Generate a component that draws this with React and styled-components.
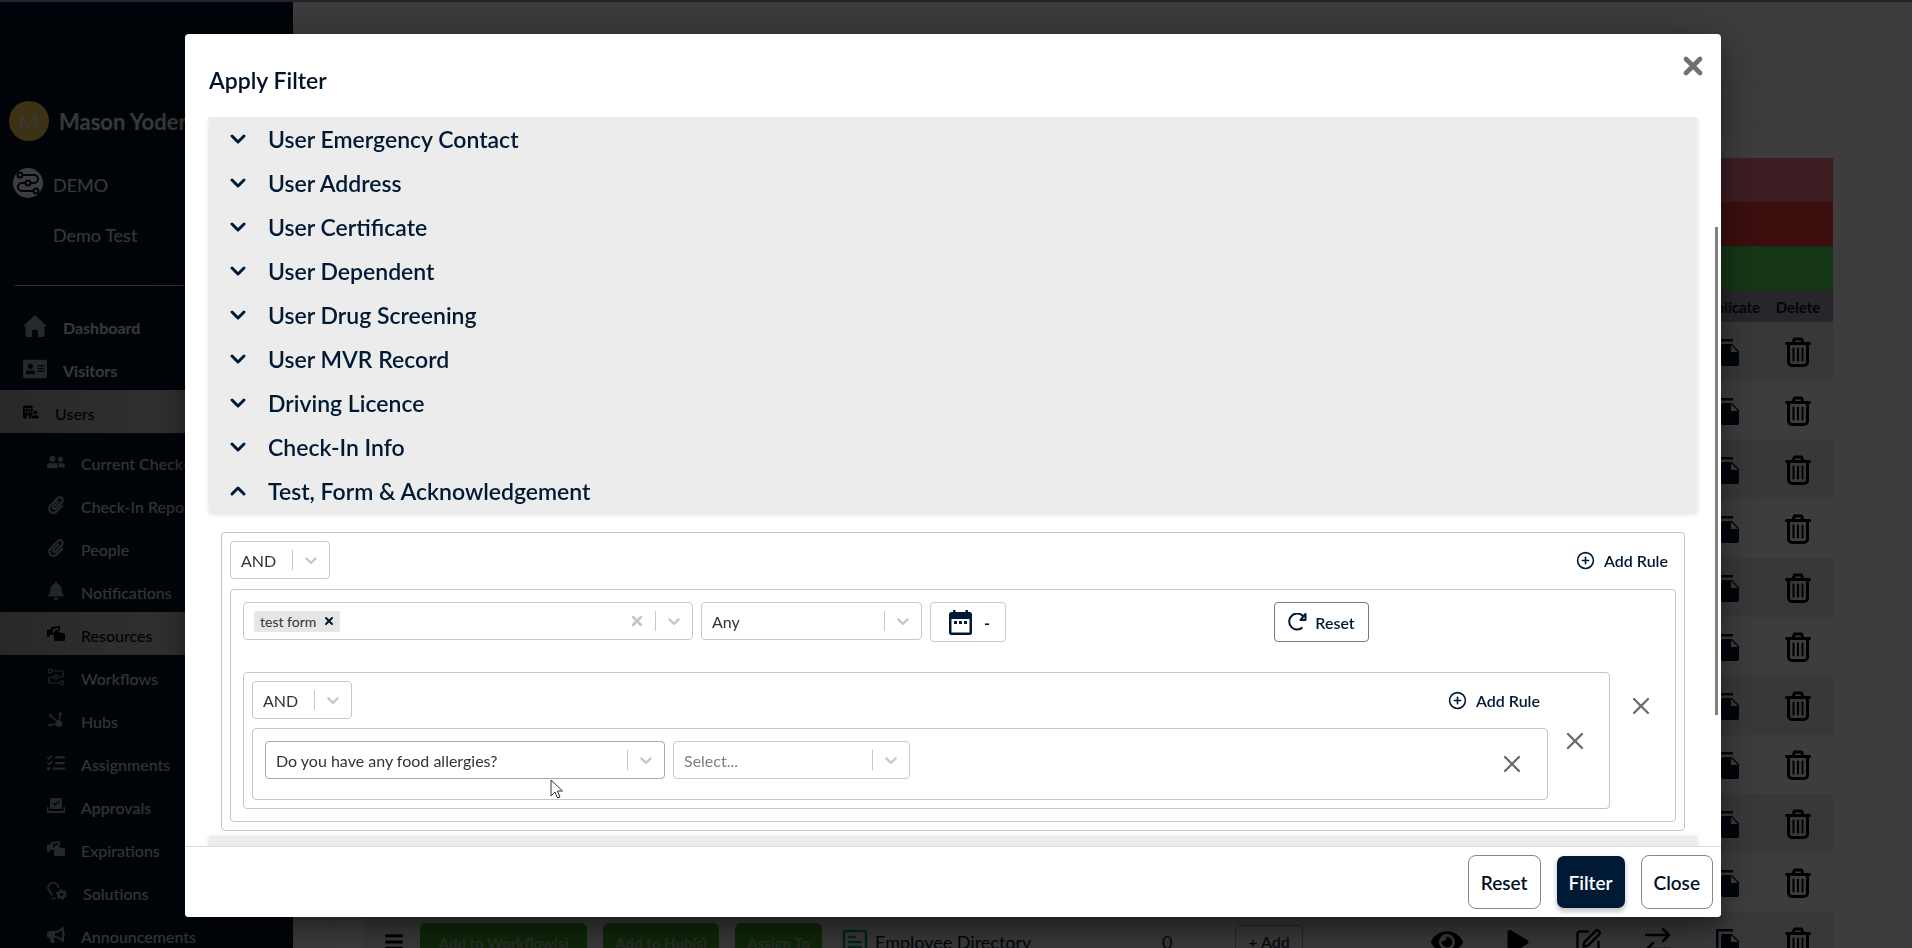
import React from 'react';
import styled, { createGlobalStyle, css } from 'styled-components';
import {
	FaAddressCard,
	FaPaperclip,
	FaBell,
	FaUserFriends,
	FaBullhorn,
	FaEye,
	FaPlay,
	FaBars,
} from 'react-icons/fa';
import { FaBuildingUser, FaListCheck } from 'react-icons/fa6';
import {
	LuChevronDown,
	LuChevronUp,
	LuCirclePlus,
	LuSquarePen,
	LuX,
} from 'react-icons/lu';

const GlobalStyle = createGlobalStyle`
	*, *::before, *::after {
		box-sizing: border-box;
	}

	body {
		margin: 0;
		overflow: hidden;
		background: #fff;
		color: #001a35;
		font-family: Lato, 'Open Sans', sans-serif;
		font-size: 16px;
	}

	button, input, select {
		font-family: inherit;
		color: inherit;
		margin: 0;
	}

	button {
		padding: 0;
		border: 0;
		background: none;
		cursor: pointer;
	}

	a {
		color: inherit;
		text-decoration: none;
	}

	svg {
		display: block;
		flex: none;
	}
`;

/* ---------- page ---------- */

const Page = styled.div`
	height: 100vh;
	overflow: hidden;
	border-top: 2px solid #928ebe;
	display: flex;
`;

const Sidebar = styled.aside`
	flex: none;
	width: 293px;
	background: #001228;
	color: #e8e8ec;
	overflow: hidden;
`;

const Profile = styled.div`
	display: flex;
	align-items: center;
	gap: 10px;
	padding: 99px 9px 0;
	font-size: 22px;
	font-weight: 700;
	white-space: nowrap;
`;

const Avatar = styled.span`
	flex: none;
	width: 40px;
	height: 40px;
	border-radius: 50%;
	background: #ffd250;
	display: flex;
	align-items: center;
	justify-content: center;
	font-weight: 400;
`;

const Company = styled.div`
	display: flex;
	align-items: center;
	gap: 10px;
	padding: 27px 13px 0;
	font-size: 18px;

	> span:last-child {
		padding-top: 4px;
	}
`;

const CompanyLogo = styled.span`
	width: 30px;
	height: 30px;
	border-radius: 50%;
	background: #fff;
	color: #001228;
	display: flex;
	align-items: center;
	justify-content: center;
`;

const Site = styled.p`
	margin: 0;
	padding: 25px 0 0 53px;
	font-size: 18px;
	line-height: 24px;
`;

const Divider = styled.hr`
	margin: 38px 15px 18px;
	border: 0;
	border-top: 1px solid #cfd4da;
`;

const Menu = styled.nav`
	display: flex;
	flex-direction: column;
	margin-bottom: 7px;
`;

const activeLink = css`
	background: linear-gradient(90deg, #a8a8ac, #cccccc 60%, #b0b0b0);
	color: #08080f;
`;

const MenuLink = styled.a`
	display: flex;
	align-items: center;
	gap: 16px;
	height: 43px;
	padding-left: ${(p) => (p.$sub ? 47 : 23)}px;
	font-size: 16px;
	font-weight: ${(p) => (p.$sub || p.$active ? 500 : 700)};
	color: ${(p) => (p.$sub ? '#d4d8de' : '#e6e6ea')};
	white-space: nowrap;
	${(p) => p.$active && activeLink}

	svg {
		opacity: ${(p) => (p.$active ? 1 : 0.7)};
	}

	span {
		padding-top: 4px;
	}
`;

const Content = styled.main`
	flex: 1;
	min-width: 0;
	padding: 82px 46px 0 37px;
	background: #fbfbfb;
`;

const SearchCard = styled.div`
	height: 44px;
	border: 1px solid #ececec;
	border-radius: 10px;
`;

const TableCard = styled.section`
	margin-top: 7px;
	padding: 22px 32px 0;
	border: 1px solid #f2f2f2;
	background: #fff;
`;

const Band = styled.div`
	height: 44px;
	background: ${(p) => p.$color};
`;

const Table = styled.table`
	width: 100%;
	border-collapse: collapse;
	table-layout: fixed;

	th {
		height: 32px;
		padding: 2px 0 0;
		background: #a0a0b4;
		font-size: 15px;
		font-weight: 700;
	}

	td {
		height: 59px;
		padding: 0;
		white-space: nowrap;
	}

	tbody tr:nth-child(odd) {
		background: #ebebeb;
	}

	td svg {
		margin: auto;
	}
`;

const RowActions = styled.div`
	display: flex;
	align-items: center;
	gap: 16px;
	padding-left: 21px;

	td & svg {
		margin: 0;
	}
`;

const GreenButton = styled.button`
	flex: none;
	width: ${(p) => p.$width}px;
	height: 38px;
	padding-top: 2px;
	border-radius: 6px;
	background: #3ca028;
	color: #a8b8a8;
	font-size: 15px;
	font-weight: 700;
`;

const FormName = styled.div`
	display: flex;
	align-items: center;
	gap: 7px;
	font-size: 18px;

	td & svg {
		margin: 0;
		color: #00a060;
	}
`;

const Count = styled.span`
	font-size: 18px;
`;

const AddButton = styled.button`
	height: 34px;
	width: 68px;
	border: 1px solid #999;
	border-radius: 5px;
	font-size: 16px;
`;

/* ---------- modal ---------- */

const Overlay = styled.div`
	position: fixed;
	inset: 0;
	display: flex;
	padding: 34px 191px 31px 185px;
	background: rgba(0, 0, 0, 0.76);
`;

const Dialog = styled.section`
	flex: 1;
	min-width: 0;
	display: flex;
	flex-direction: column;
	border-radius: 4px;
	background: #fff;
	overflow: hidden;
	box-shadow: 0 11px 15px rgba(0, 0, 0, 0.2), 0 9px 46px rgba(0, 0, 0, 0.4);
`;

const DialogHeader = styled.header`
	flex: none;
	display: flex;
	justify-content: space-between;
	height: 83px;
	padding: 18px 14px 0 24px;

	h2 {
		margin: 0;
		padding-top: 14px;
		font-size: 23px;
		line-height: 28px;
		font-weight: 600;
		color: #001228;
	}

	button {
		height: 28px;
		color: #707070;
	}
`;

const DialogBody = styled.div`
	flex: 1;
	min-height: 0;
	display: flex;
	overflow: hidden;
`;

const Scroller = styled.div`
	flex: 1;
	min-width: 0;
	padding: 0 18px 0 24px;
`;

const ScrollTrack = styled.div`
	flex: none;
	width: 3px;
	margin-right: 3px;
	padding-top: 110px;

	&::before {
		content: '';
		display: block;
		height: 488px;
		background: #808080;
	}
`;

const Panel = styled.div`
	min-height: 40px;
	background: #ececec;
	box-shadow: 0 1px 5px rgba(0, 0, 0, 0.14);
`;

const Section = styled.button`
	display: flex;
	align-items: center;
	gap: 18px;
	width: 100%;
	height: 44px;
	padding: 0 17px;
	font-size: 23px;
	font-weight: 600;
	text-align: left;
`;

const Builder = styled.div`
	padding: 19px 12px 5px;
`;

const Frame = styled.div`
	border: 1px solid #c6c6c8;
	border-radius: 4px;
`;

const Group = styled(Frame)`
	display: flex;
	align-items: center;
	gap: 13px;
	padding: 8px;
	padding-right: ${(p) => (p.$nested ? 20 : 8)}px;
`;

const GroupBody = styled.div`
	flex: 1;
	min-width: 0;
	display: flex;
	flex-direction: column;
	gap: ${(p) => (p.$nested ? 9 : 10)}px;
`;

const GroupHead = styled.div`
	display: flex;
	align-items: center;
	justify-content: space-between;
	padding-right: 8px;
`;

const AddRule = styled.button`
	display: flex;
	align-items: center;
	gap: 9px;
	font-size: 16px;
	font-weight: 600;
`;

const FormRule = styled(Frame)`
	display: flex;
	align-items: center;
	gap: 17px;
	padding: 12px 20px 12px 12px;
`;

const FormRuleBody = styled.div`
	flex: 1;
	min-width: 0;
	display: flex;
	flex-direction: column;
	gap: 30px;
`;

const Fields = styled.div`
	display: flex;
	align-items: flex-start;
	gap: 8px;
`;

const QuestionRule = styled(Frame)`
	display: flex;
	align-items: center;
	justify-content: space-between;
	padding: 12px 21px 12px 12px;

	${Fields} {
		min-height: 46px;
	}
`;

const RemoveButton = styled.button`
	flex: none;
	width: 28px;
	height: 28px;
	color: #6c6c6c;
`;

const Control = styled.div`
	position: relative;
	flex: none;
	display: flex;
	align-items: center;
	width: ${(p) => p.$width}px;
	height: 38px;
	border: 1px solid ${(p) => (p.$hover ? '#a8a8a8' : '#c8c8c8')};
	border-radius: 4px;
	background: #fff;
	color: #c8c8c8;

	select {
		flex: 1;
		min-width: 0;
		height: 36px;
		padding: 0 10px;
		border: 0;
		outline: 0;
		appearance: none;
		background: transparent;
		font-size: 16px;
		color: ${(p) => (p.$empty ? '#808080' : '#333')};
	}

	input {
		flex: 1;
		min-width: 0;
		border: 0;
		outline: 0;
		font-size: 16px;
	}
`;

const Separator = styled.span`
	width: 1px;
	height: 20px;
	background: #c8c8c8;
`;

const Arrow = styled.span`
	padding: 0 8px;
`;

const Tag = styled.span`
	display: flex;
	align-items: center;
	gap: 7px;
	height: 21px;
	margin-left: 10px;
	padding: 0 5px 0 6px;
	border-radius: 2px;
	background: #e6e6e6;
	color: #333;
	font-size: 14px;

	button {
		color: #001228;
	}
`;

const ClearButton = styled.button`
	padding-right: 10px;
	color: #c8c8c8;
`;

const DateButton = styled.button`
	display: flex;
	align-items: center;
	gap: 12px;
	width: 76px;
	height: 40px;
	padding-left: 18px;
	border: 1px solid #c8c8c8;
	border-radius: 4px;
	font-size: 16px;
	font-weight: 700;
`;

const ResetRule = styled.button`
	display: flex;
	align-items: center;
	justify-content: center;
	gap: 8px;
	width: 95px;
	height: 40px;
	margin-left: auto;
	margin-right: 241px;
	border: 1px solid #787878;
	border-radius: 4px;
	font-size: 16px;
	font-weight: 600;
`;

const Pointer = styled.svg`
	position: absolute;
	left: 284px;
	top: 37px;
`;

const DialogFooter = styled.footer`
	flex: none;
	display: flex;
	align-items: flex-start;
	justify-content: flex-end;
	gap: 15px;
	height: 71px;
	padding: 8px 8px 0;
	border-top: 1px solid #dcdcdc;
	background: #fff;
`;

const FooterButton = styled.button`
	height: 54px;
	padding: 0 12px;
	border: 1px solid ${(p) => (p.$primary ? 'transparent' : '#868686')};
	border-radius: 8px;
	background: ${(p) => (p.$primary ? '#001a35' : '#fff')};
	background-clip: padding-box;
	color: ${(p) => (p.$primary ? '#fff' : '#001228')};
	box-shadow: ${(p) => (p.$primary ? '0 3px 4px rgba(0, 0, 0, 0.2)' : 'none')};
	font-size: 19px;
	font-weight: 600;
`;

/* ---------- icons ---------- */

const HomeIcon = () => (
	<svg width="24" height="22" viewBox="0 0 24 22" fill="currentColor">
		<path d="M12 0l12 11.500h-2.500V20a2 2 0 0 1-2 2H15v-7H9v7H4.500a2 2 0 0 1-2-2v-8.500H0z" />
	</svg>
);

const FlowIcon = ({ size = 16, width = 2 }) => (
	<svg width={size} height={size} viewBox="0 0 24 24" fill="none" stroke="currentColor" strokeWidth={width}>
		<circle cx="4" cy="4" r="2.5" />
		<circle cx="12" cy="12" r="2.5" />
		<circle cx="20" cy="20" r="2.5" />
		<path d="M6.5 4H18a4 4 0 0 1 0 8h-3.5M9.500 12H6a4 4 0 0 0 0 8h11.500" />
	</svg>
);

const MediaIcon = () => (
	<svg width="18" height="15" viewBox="0 0 18 15" fill="currentColor">
		<path d="M0 4l4-1V1l9-1v4h-2V2L6 3v4h2v2H2.500v2H1a1 1 0 0 1-1-1z" />
		<path d="M7 6l2-2.500 1.500 1L12 3v3h1l1 1h3a1 1 0 0 1 1 1v6a1 1 0 0 1-1 1H8a1 1 0 0 1-1-1z" />
	</svg>
);

const HubIcon = () => (
	<svg width="18" height="16" viewBox="0 0 18 16" fill="currentColor" stroke="currentColor">
		<path d="M4 4l8 7M12 11l1-8M12 11l-8 2" fill="none" strokeWidth="1.500" />
		<circle cx="3.500" cy="3.500" r="1.200" />
		<circle cx="13.500" cy="2" r="1.200" />
		<circle cx="3" cy="13" r="1.200" />
		<circle cx="12" cy="11.500" r="3" />
	</svg>
);

const ApprovalIcon = () => (
	<svg width="18" height="15" viewBox="0 0 18 15" fill="currentColor">
		<path fillRule="evenodd" d="M4 0h10a1 1 0 0 1 1 1v10H3V1a1 1 0 0 1 1-1zm2 5.500l2.500 2.500L13 3.500 12 2.500 8.500 6 7 4.500z" />
		<path d="M0 9h1.500v4h15V9H18v6H0z" />
	</svg>
);

const SolutionIcon = () => (
	<svg width="20" height="19" viewBox="0 0 20 19" fill="none" stroke="currentColor">
		<path d="M5 14c0-4-4-4.500-4-8a5.200 5.200 0 0 1 10.500 0M4.500 16.500h4" strokeWidth="1.700" />
		<circle cx="14.500" cy="12.500" r="3" strokeWidth="2.500" />
		<circle cx="14.500" cy="12.500" r="4.700" strokeWidth="1.500" strokeDasharray="2.400 2.500" />
	</svg>
);

const TrashIcon = () => (
	<svg width="26" height="30" viewBox="0 0 26 30" fill="none" stroke="#000" strokeWidth="3" strokeLinecap="round" strokeLinejoin="round">
		<path d="M1.500 6.500h23M8 6l1.500-4h7L18 6M3.500 7v18a3.500 3.500 0 0 0 3.500 3.500h12a3.500 3.500 0 0 0 3.500-3.500V7" />
		<path d="M8.500 11.500v12M13 11.500v12M17.500 11.500v12" strokeWidth="2" />
	</svg>
);

const CopyIcon = () => (
	<svg width="24" height="28" viewBox="0 0 24 28" fill="#001228">
		<path d="M0 2a1 1 0 0 1 1-1h16v2.500H2.500V24H0z" />
		<path fillRule="evenodd" d="M5 8a2 2 0 0 1 2-2h9l7 7v13a2 2 0 0 1-2 2H7a2 2 0 0 1-2-2zm10-1v7h7z" />
	</svg>
);

const SwapIcon = () => (
	<svg width="26" height="30" viewBox="0 0 26 30" fill="none" stroke="#000" strokeWidth="2.500" strokeLinecap="round" strokeLinejoin="round">
		<path d="M1 8h23M18 2l6 6-6 6M25 22H2M8 16l-6 6 6 6" />
	</svg>
);

const FormIcon = () => (
	<svg width="26" height="26" viewBox="0 0 26 26" fill="none" stroke="currentColor" strokeWidth="2.500" strokeLinecap="round">
		<rect x="2" y="2" width="22" height="22" rx="2" />
		<path d="M7 8h6M7 13h12M7 18h12" />
	</svg>
);

const CalendarIcon = () => (
	<svg width="23" height="25" viewBox="0 0 23 25" fill="#001a35">
		<path fillRule="evenodd" d="M4 0h2.500v2h10V0H19v2h1.500A2.500 2.500 0 0 1 23 4.500v18a2.500 2.500 0 0 1-2.500 2.500h-18A2.500 2.500 0 0 1 0 22.500v-18A2.500 2.500 0 0 1 2.500 2H4zM2.500 9v13.500h18V9z" />
		<path d="M5 11h3v3H5zM10 11h3v3h-3zM15 11h3v3h-3z" />
	</svg>
);

const ReloadIcon = () => (
	<svg width="19" height="18" viewBox="0 0 19 18" fill="none" stroke="#001a35" strokeWidth="2">
		<path d="M14.500 14.500a8 8 0 1 1 .500-11.500" />
		<path d="M17.500 1v6h-5z" strokeLinejoin="round" />
	</svg>
);

const Chevron = () => (
	<svg width="20" height="20" viewBox="0 0 20 20" fill="currentColor">
		<path d="M4.516 7.548c0.436-0.446 1.043-0.481 1.576 0l3.908 3.747 3.908-3.747c0.533-0.481 1.141-0.446 1.574 0 0.436 0.445 0.408 1.197 0 1.615-0.406 0.418-4.695 4.502-4.695 4.502-0.217 0.223-0.502 0.335-0.787 0.335s-0.570-0.112-0.789-0.335c0 0-4.287-4.084-4.695-4.502s-0.436-1.170 0-1.615z" />
	</svg>
);

/* ---------- data ---------- */

const mainLinks = [
	{ label: 'Dashboard', icon: <HomeIcon /> },
	{ label: 'Visitors', icon: <FaAddressCard size={24} /> },
	{ label: 'Users', icon: <FaBuildingUser size={16} />, active: true },
];

const subLinks = [
	{ label: 'Current Check-In', icon: <FaUserFriends size={18} /> },
	{ label: 'Check-In Report', icon: <FaPaperclip size={18} /> },
	{ label: 'People', icon: <FaPaperclip size={18} /> },
	{ label: 'Notifications', icon: <FaBell size={18} /> },
	{ label: 'Resources', icon: <MediaIcon />, active: true },
	{ label: 'Workflows', icon: <FlowIcon size={18} width={1.5} /> },
	{ label: 'Hubs', icon: <HubIcon /> },
	{ label: 'Assignments', icon: <FaListCheck size={18} /> },
	{ label: 'Approvals', icon: <ApprovalIcon /> },
	{ label: 'Expirations', icon: <MediaIcon /> },
	{ label: 'Solutions', icon: <SolutionIcon /> },
	{ label: 'Announcements', icon: <FaBullhorn size={18} /> },
];

const sections = [
	'User Emergency Contact',
	'User Address',
	'User Certificate',
	'User Dependent',
	'User Drug Screening',
	'User MVR Record',
	'Driving Licence',
	'Check-In Info',
	'Test, Form & Acknowledgement',
];

const rows = Array.from({ length: 11 }, (_, i) => i);

/* ---------- parts ---------- */

function Select({ label, value, width, hover, empty, children }) {
	return (
		<Control $width={width} $hover={hover} $empty={empty}>
			<select aria-label={label} defaultValue={value}>
				<option>{value}</option>
			</select>
			<Separator />
			<Arrow>
				<Chevron />
			</Arrow>
			{children}
		</Control>
	);
}

function Remove({ label }) {
	return (
		<RemoveButton type="button" aria-label={label}>
			<LuX size={28} />
		</RemoveButton>
	);
}

function GroupHeader() {
	return (
		<GroupHead>
			<Select label="Condition" value="AND" width={100} />
			<AddRule type="button">
				<LuCirclePlus size={19} />
				Add Rule
			</AddRule>
		</GroupHead>
	);
}

function Background() {
	return (
		<Page>
			<Sidebar>
				<Profile>
					<Avatar>M</Avatar>
					Mason Yoder
				</Profile>
				<Company>
					<CompanyLogo>
						<FlowIcon size={24} width={2} />
					</CompanyLogo>
					<span>DEMO</span>
				</Company>
				<Site>Demo Test</Site>
				<Divider />
				<Menu>
					{mainLinks.map((link) => (
						<MenuLink href="#" key={link.label} $active={link.active}>
							{link.icon}
							<span>{link.label}</span>
						</MenuLink>
					))}
				</Menu>
				<Menu>
					{subLinks.map((link) => (
						<MenuLink href="#" key={link.label} $sub $active={link.active}>
							{link.icon}
							<span>{link.label}</span>
						</MenuLink>
					))}
				</Menu>
			</Sidebar>
			<Content>
				<SearchCard />
				<TableCard>
					<Band $color="#ff7890" />
					<Band $color="#f83c3c" />
					<Band $color="#5ae15a" />
					<Table>
						<colgroup>
							<col />
							<col width="320" />
							<col width="73" />
							<col width="176" />
							<col width="72" />
							<col width="70" />
							<col width="70" />
							<col width="70" />
							<col width="70" />
							<col width="70" />
						</colgroup>
						<thead>
							<tr>
								<th colSpan={8} />
								<th>Duplicate</th>
								<th>Delete</th>
							</tr>
						</thead>
						<tbody>
							{rows.map((row) => {
								const last = row === rows.length - 1;
								return (
									<tr key={row}>
										<td>
											{last && (
												<RowActions>
													<FaBars size={20} color="#000" />
													<GreenButton $width={167}>Add to Workflow(s)</GreenButton>
													<GreenButton $width={116}>Add to Hub(s)</GreenButton>
													<GreenButton $width={87}>Assign To</GreenButton>
												</RowActions>
											)}
										</td>
										<td>
											{last && (
												<FormName>
													<FormIcon />
													Employee Directory
												</FormName>
											)}
										</td>
										<td>{last && <Count>0</Count>}</td>
										<td>{last && <AddButton>+ Add</AddButton>}</td>
										<td>{last && <FaEye size={32} color="#000" />}</td>
										<td>{last && <FaPlay size={24} color="#000" />}</td>
										<td>{last && <LuSquarePen size={28} color="#000" />}</td>
										<td>{last && <SwapIcon />}</td>
										<td>
											<CopyIcon />
										</td>
										<td>
											<TrashIcon />
										</td>
									</tr>
								);
							})}
						</tbody>
					</Table>
				</TableCard>
			</Content>
		</Page>
	);
}

export default function App() {
	return (
		<>
			<GlobalStyle />
			<Background />
			<Overlay>
				<Dialog role="dialog" aria-labelledby="filter-title">
					<DialogHeader>
						<h2 id="filter-title">Apply Filter</h2>
						<button type="button" aria-label="Close dialog">
							<LuX size={28} strokeWidth={4} />
						</button>
					</DialogHeader>
					<DialogBody>
						<Scroller>
							<Panel>
								{sections.map((name, i) => (
									<Section type="button" key={name}>
										{i === sections.length - 1 ? (
											<LuChevronUp size={24} strokeWidth={3} />
										) : (
											<LuChevronDown size={24} strokeWidth={3} />
										)}
										{name}
									</Section>
								))}
							</Panel>
							<Builder>
								<Group>
									<GroupBody>
										<GroupHeader />
										<FormRule>
											<FormRuleBody>
												<Fields>
													<Control $width={450}>
														<Tag>
															test form
															<button type="button" aria-label="Remove test form">
																<LuX size={12} strokeWidth={4} />
															</button>
														</Tag>
														<input type="text" aria-label="Form" />
														<ClearButton type="button" aria-label="Clear forms">
															<LuX size={16} strokeWidth={4} />
														</ClearButton>
														<Separator />
														<Arrow>
															<Chevron />
														</Arrow>
													</Control>
													<Select label="Status" value="Any" width={221} />
													<DateButton type="button" aria-label="Date range">
														<CalendarIcon />-
													</DateButton>
													<ResetRule type="button">
														<ReloadIcon />
														Reset
													</ResetRule>
												</Fields>
												<Group $nested>
													<GroupBody $nested>
														<GroupHeader />
														<QuestionRule>
															<Fields>
																<Select
																	label="Question"
																	value="Do you have any food allergies?"
																	width={400}
																	hover
																>
																	<Pointer width="13" height="21" viewBox="0 0 13 21">
																		<path
																			d="M1 1v16l4-4 2.500 6 2.500-1-2.500-6h5z"
																			fill="#fff"
																			stroke="#333"
																		/>
																	</Pointer>
																</Select>
																<Select label="Answer" value="Select..." width={237} empty />
															</Fields>
															<Remove label="Remove rule" />
														</QuestionRule>
													</GroupBody>
													<Remove label="Remove group" />
												</Group>
											</FormRuleBody>
											<Remove label="Remove form rule" />
										</FormRule>
									</GroupBody>
								</Group>
							</Builder>
							<Panel />
						</Scroller>
						<ScrollTrack />
					</DialogBody>
					<DialogFooter>
						<FooterButton type="button">Reset</FooterButton>
						<FooterButton type="button" $primary>
							Filter
						</FooterButton>
						<FooterButton type="button">Close</FooterButton>
					</DialogFooter>
				</Dialog>
			</Overlay>
		</>
	);
}
